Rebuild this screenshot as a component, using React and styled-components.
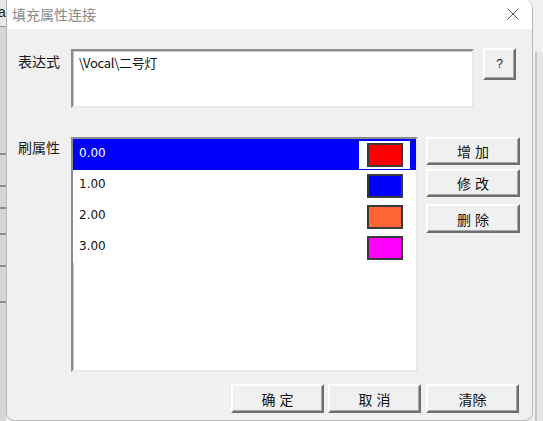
import styled, { createGlobalStyle } from 'styled-components'

const GlobalStyle = createGlobalStyle`
  html, body {
    margin: 0;
    padding: 0;
    background: #f0f0f0;
  }
  body {
    font-family: "Noto Sans CJK SC", "Noto Sans", sans-serif;
  }
`

const Page = styled.div`
  display: flex;
  width: 543px;
  height: 421px;
  overflow: hidden;
`

const LeftStrip = styled.div`
  width: 6px;
  flex-shrink: 0;
  background: #d6d6d6;
  display: flex;
  flex-direction: column;
`

const StripLine = styled.div`
  height: ${({ gap }) => gap}px;
  border-bottom: 2px solid #8a8a8a;
  flex-shrink: 0;
`

const StripChar = styled.div`
  height: 26px;
  font-family: "Liberation Sans", sans-serif;
  font-size: 14px;
  line-height: 24px;
  color: #222;
  text-indent: -2px;
  background: #e8e8e8;
  border-bottom: 1px solid #9a9a9a;
`

const RightStrip = styled.div`
  flex: 1;
  background: #f0f0f0;
  display: flex;
  justify-content: flex-end;
  padding-top: 52px;
`

const RightEdge = styled.div`
  width: 6px;
  border-left: 2px solid #c4c4c4;
  background: #e6e6e6;
`

const Dialog = styled.div`
  width: 527px;
  flex-shrink: 0;
  display: flex;
  flex-direction: column;
  border: 1px solid #b8b8b8;
  border-top: none;
  border-radius: 0 8px 8px 8px;
  overflow: hidden;
  box-sizing: border-box;
  background: #f0f0f0;
`

const TitleBar = styled.div`
  height: 29px;
  background: #fff;
  display: flex;
  align-items: center;
  justify-content: space-between;
  padding: 0 13px 0 5px;
  flex-shrink: 0;
`

const Title = styled.div`
  font-size: 14px;
  color: #8a8a8a;
  line-height: 1;
  margin-top: -2px;
`

const CloseIcon = styled.svg`
  width: 12px;
  height: 12px;
  margin-top: -2px;
`

const Body = styled.div`
  flex: 1;
  display: flex;
  flex-direction: column;
  padding: 19px 12px 0 11px;
`

const Row = styled.div`
  display: flex;
  align-items: flex-start;
  margin-top: ${({ mt }) => mt || 0}px;
`

const Label = styled.div`
  width: 53px;
  flex-shrink: 0;
  font-size: 14px;
  color: #1a1a1a;
  line-height: 20px;
  padding-top: ${({ pt }) => pt}px;
`

const Sunken = styled.div`
  box-sizing: border-box;
  background: #fff;
  border-top: 2px solid #8c8c8c;
  border-left: 2px solid #8c8c8c;
  border-bottom: 2px solid #e8e8e8;
  border-right: 2px solid #e8e8e8;
  box-shadow: inset 1px 1px 0 #c8c8c8;
`

const ExprBox = styled(Sunken)`
  width: 403px;
  height: 59px;
  margin-top: 1px;
  padding: 3px 6px;
  font-size: 13px;
  letter-spacing: -0.3px;
  color: #111;
  line-height: 18px;
`

const Button = styled.button`
  box-sizing: border-box;
  width: ${({ w }) => w}px;
  height: ${({ h }) => h}px;
  margin-top: ${({ mt }) => mt || 0}px;
  margin-left: ${({ ml }) => ml || 0}px;
  padding: 0;
  background: #f0f0f0;
  border-top: 2px solid #fff;
  border-left: 2px solid #fff;
  border-bottom: 2px solid #6e6e6e;
  border-right: 2px solid #6e6e6e;
  box-shadow: inset -1px -1px 0 #a8a8a8;
  font-family: "Noto Sans CJK SC", sans-serif;
  font-size: 14px;
  letter-spacing: ${({ spaced }) => (spaced ? '4px' : '0')};
  text-indent: ${({ spaced }) => (spaced ? '4px' : '0')};
  color: #111;
  line-height: 1;
  display: flex;
  align-items: center;
  justify-content: center;
`

const HelpText = styled.span`
  font-family: "Liberation Sans", sans-serif;
  font-size: 12px;
  color: #222;
`

const ListBox = styled(Sunken)`
  width: 348px;
  height: 235px;
  overflow: hidden;
`

const ListRow = styled.div`
  height: 31px;
  display: flex;
  align-items: center;
  justify-content: space-between;
  background: ${({ selected }) => (selected ? '#0000ff' : '#fff')};
  padding-left: 6px;
  padding-right: 6px;
`

const Value = styled.span`
  font-family: "DejaVu Sans", sans-serif;
  font-size: 12px;
  color: ${({ selected }) => (selected ? '#fff' : '#111')};
  margin-top: -4px;
`

const SwatchCell = styled.div`
  width: 51px;
  height: 28px;
  display: flex;
  align-items: center;
  justify-content: center;
  background: ${({ selected }) => (selected ? '#fff' : 'transparent')};
`

const Swatch = styled.div`
  box-sizing: border-box;
  width: 36px;
  height: 24px;
  background: ${({ color }) => color};
  border: 2px solid #3a3a3a;
`

const SideButtons = styled.div`
  display: flex;
  flex-direction: column;
  margin-left: 8px;
`

const Footer = styled.div`
  display: flex;
  justify-content: flex-end;
  margin-top: 12px;
  padding-right: 1px;
`

const rows = [
  { value: '0.00', color: '#ff0000' },
  { value: '1.00', color: '#0000ff' },
  { value: '2.00', color: '#ff6633' },
  { value: '3.00', color: '#ff00ff' },
]

const App = () => {
  return (
    <>
      <GlobalStyle />
      <Page>
        <LeftStrip>
          <StripChar>a</StripChar>
          <StripLine gap={126} />
          <StripLine gap={30} />
          <StripLine gap={20} />
          <StripLine gap={24} />
          <StripLine gap={30} />
          <StripLine gap={34} />
        </LeftStrip>
        <Dialog>
          <TitleBar>
            <Title>填充属性连接</Title>
            <CloseIcon viewBox="0 0 12 12">
              <path d="M0.5 0.5 L11.5 11.5 M11.5 0.5 L0.5 11.5" stroke="#555" strokeWidth="1" fill="none" />
            </CloseIcon>
          </TitleBar>
          <Body>
            <Row>
              <Label pt={3}>表达式</Label>
              <ExprBox>\Vocal\二号灯</ExprBox>
              <Button w={33} h={32} ml={9}>
                <HelpText>?</HelpText>
              </Button>
            </Row>
            <Row mt={29}>
              <Label pt={-2}>刷属性</Label>
              <ListBox>
                {rows.map((r, i) => (
                  <ListRow key={r.value} selected={i === 0}>
                    <Value selected={i === 0}>{r.value}</Value>
                    <SwatchCell selected={i === 0}>
                      <Swatch color={r.color} />
                    </SwatchCell>
                  </ListRow>
                ))}
              </ListBox>
              <SideButtons>
                <Button w={94} h={28} spaced>增加</Button>
                <Button w={94} h={28} mt={4} spaced>修改</Button>
                <Button w={94} h={29} mt={7} spaced>删除</Button>
              </SideButtons>
            </Row>
            <Footer>
              <Button w={93} h={29} spaced>确定</Button>
              <Button w={93} h={29} ml={4} spaced>取消</Button>
              <Button w={93} h={29} ml={5}>清除</Button>
            </Footer>
          </Body>
        </Dialog>
        <RightStrip>
          <RightEdge />
        </RightStrip>
      </Page>
    </>
  )
}

export default App
